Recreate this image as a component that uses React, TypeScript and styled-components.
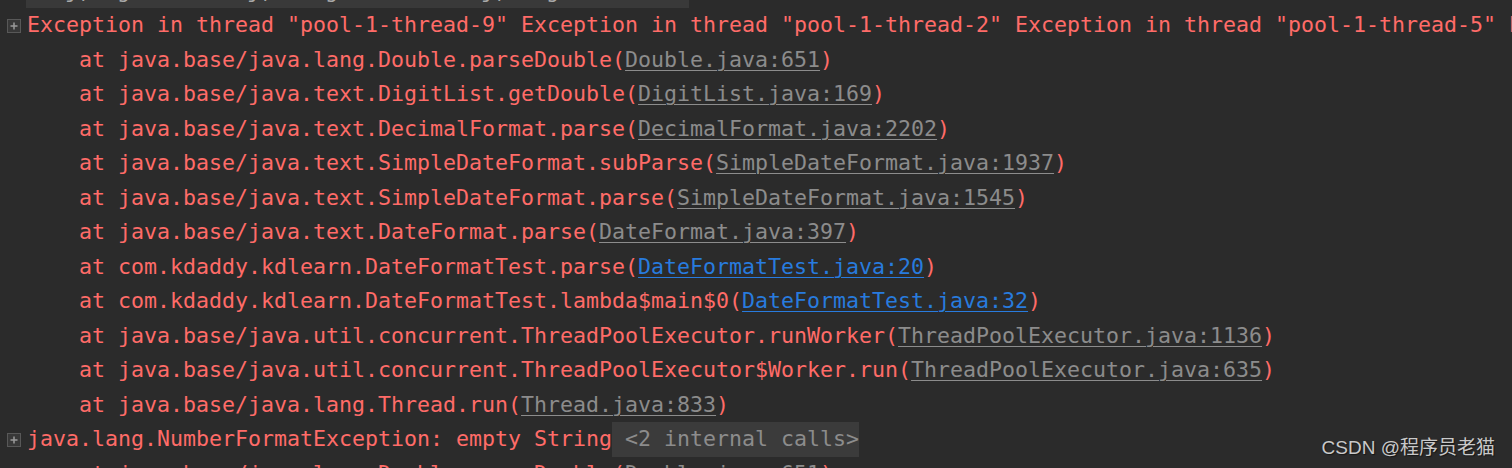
import React from "react";
import styled, { createGlobalStyle } from "styled-components";

const GlobalStyle = createGlobalStyle`
  html, body {
    margin: 0;
    padding: 0;
    background: #2b2b2b;
    overflow: hidden;
  }
`;

type Tone = "error" | "file" | "source";
type Part = { text: string; tone: Tone };

const frame = (call: string, file: string, tone: Tone = "file"): Part[] => [
  { text: "    at " + call + "(", tone: "error" },
  { text: file, tone },
  { text: ")", tone: "error" },
];

const trace: Part[][] = [
  frame("java.base/java.lang.Double.parseDouble", "Double.java:651"),
  frame("java.base/java.text.DigitList.getDouble", "DigitList.java:169"),
  frame("java.base/java.text.DecimalFormat.parse", "DecimalFormat.java:2202"),
  frame("java.base/java.text.SimpleDateFormat.subParse", "SimpleDateFormat.java:1937"),
  frame("java.base/java.text.SimpleDateFormat.parse", "SimpleDateFormat.java:1545"),
  frame("java.base/java.text.DateFormat.parse", "DateFormat.java:397"),
  frame("com.kdaddy.kdlearn.DateFormatTest.parse", "DateFormatTest.java:20", "source"),
  frame("com.kdaddy.kdlearn.DateFormatTest.lambda$main$0", "DateFormatTest.java:32", "source"),
  frame("java.base/java.util.concurrent.ThreadPoolExecutor.runWorker", "ThreadPoolExecutor.java:1136"),
  frame("java.base/java.util.concurrent.ThreadPoolExecutor$Worker.run", "ThreadPoolExecutor.java:635"),
  frame("java.base/java.lang.Thread.run", "Thread.java:833"),
];

const ROW = 34.5;

function Parts({ parts }: { parts: Part[] }) {
  return (
    <>
      {parts.map((p, j) =>
        p.tone === "error" ? (
          <Text key={j} tone="error">
            {p.text}
          </Text>
        ) : (
          <Link key={j} tone={p.tone}>
            {p.text}
          </Link>
        )
      )}
    </>
  );
}

function App() {
  return (
    <>
      <GlobalStyle />
      <Console>
        <TopRow>
          <Gutter />
          <Content>
            <Folded>{"   j,  ga        j,    ga          j,   ga"}</Folded>
          </Content>
        </TopRow>
        <Row>
          <Gutter>
            <FoldIcon />
          </Gutter>
          <Content>
            <Text tone="error">
              {
                'Exception in thread "pool-1-thread-9" Exception in thread "pool-1-thread-2" Exception in thread "pool-1-thread-5" Exception in thread "pool-1-thread-7"'
              }
            </Text>
          </Content>
        </Row>
        {trace.map((parts, i) => (
          <Row key={i}>
            <Gutter />
            <Content>
              <Parts parts={parts} />
            </Content>
          </Row>
        ))}
        <Row>
          <Gutter>
            <FoldIcon />
          </Gutter>
          <Content>
            <Text tone="error">java.lang.NumberFormatException: empty String</Text>
            <Chip>{" <2 internal calls>"}</Chip>
          </Content>
        </Row>
        <Row>
          <Gutter />
          <Content>
            <Parts parts={frame("java.base/java.lang.Double.parseDouble", "Double.java:651")} />
          </Content>
        </Row>
        <Watermark>CSDN @程序员老猫</Watermark>
      </Console>
    </>
  );
}

function FoldIcon() {
  return (
    <svg width="14" height="14" viewBox="0 0 14 14">
      <rect x="0.5" y="0.5" width="13" height="13" fill="#383838" stroke="#585858" />
      <path d="M3.5 7h7M7 3.5v7" stroke="#9a9a9a" strokeWidth="1.5" />
    </svg>
  );
}

const Console = styled.div`
  position: relative;
  width: 1512px;
  height: 468px;
  overflow: hidden;
  background: #2b2b2b;
  font-family: "DejaVu Sans Mono", "Liberation Mono", monospace;
  font-size: 21.6px;
`;

const Row = styled.div`
  display: flex;
  height: ${ROW}px;
  line-height: ${ROW}px;
  white-space: pre;
`;

const TopRow = styled(Row)`
  margin-top: ${8.25 - ROW}px;
`;

const Gutter = styled.div`
  flex: 0 0 27px;
  display: flex;
  align-items: center;
  padding-left: 7px;
  box-sizing: border-box;
  svg {
    display: block;
  }
`;

const Content = styled.div`
  display: flex;
  align-items: stretch;
  flex: 1;
  min-width: 0;
`;

const colors: Record<Tone, string> = {
  error: "#ff6b68",
  file: "#8c8c8c",
  source: "#287bde",
};

const Text = styled.span<{ tone: Tone }>`
  color: ${(p) => colors[p.tone]};
`;

const Link = styled.span<{ tone: Tone }>`
  color: ${(p) => colors[p.tone]};
  text-decoration: underline;
  text-decoration-thickness: 1px;
  text-underline-offset: 3px;
`;

const Chip = styled.span`
  background: #3b3b3b;
  color: #8c8c8c;
`;

const Folded = styled.span`
  background: #393939;
  color: #a9a9a9;
  margin-left: -1px;
  display: inline-block;
  width: 663px;
  overflow: hidden;
`;

const Watermark = styled.div`
  position: absolute;
  right: 17px;
  bottom: 9px;
  font-family: "Liberation Sans", "Noto Sans CJK SC", sans-serif;
  font-size: 19px;
  line-height: 22px;
  color: #c9c9c9;
  text-shadow: 1px 1px 1px rgba(0, 0, 0, 0.5);
`;

export default App;
